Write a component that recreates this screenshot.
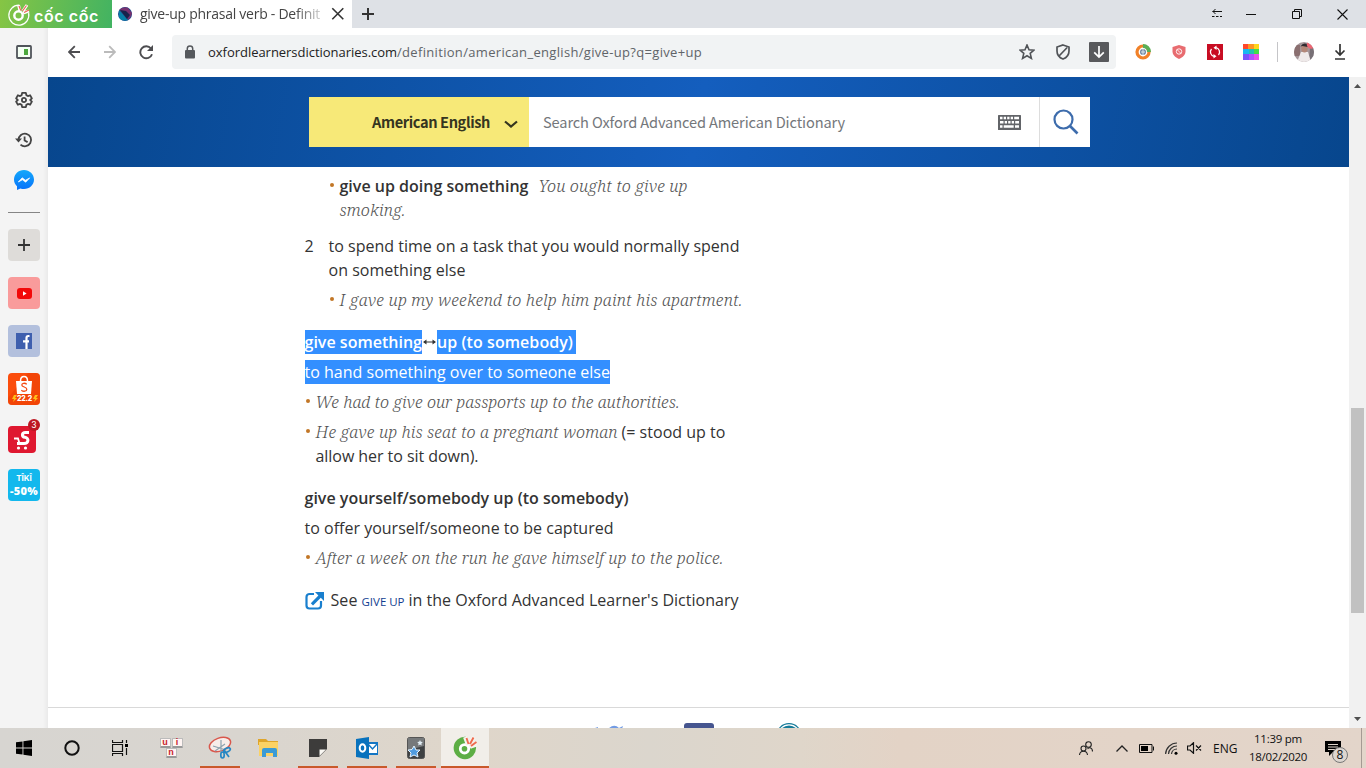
<script>
  // Spreads a run of text over a given width by adjusting its tracking.
  function fit(node, width) {
    const natural = node.getBoundingClientRect().width;
    const count = [...node.textContent].length;
    node.style.letterSpacing = (width - natural) / count + 'px';
  }
</script>

<div class="screen">
  <div class="tabs">
    <div class="brand">
      <svg width="24" height="26" viewBox="0 0 24 26">
        <path d="M12 4.200A10 10 0 1 0 21.600 12" fill="none" stroke="#fff" stroke-width="1.200" />
        <circle cx="11.500" cy="14.500" r="4.200" fill="none" stroke="#fff" stroke-width="2.400" />
        <path d="M11.500 4l1.500 6M20 4l-4 6M22 10l-6 2" stroke="#fff" stroke-width="3" />
        <path d="M12 5l1.800 4.500M19.500 4.500l-4 5.500M22 9l-5 2.500" stroke="#ec6254" stroke-width="1.200" />
      </svg>
      <span class="brandname"><b use:fit={65}>cốc cốc</b></span>
    </div>
    <div class="tab">
      <svg width="14" height="16" viewBox="0 0 14 16">
        <circle cx="7" cy="8" r="7" fill="#164a91" /><path d="M1 4Q5 0 10 1.700L14 7Q13 12 10 14Q5 7 1 4Z" fill="#76316f" /><path d="M1 4L10 14Q3 16 1 11Z" fill="#087fa7" /><path d="M2 4L8 5L12 9L9 13Z" fill="#17234c" />
      </svg>
      <span class="tabname"><span use:fit={180}>give-up phrasal verb - Definit</span></span>
      <svg width="14" height="14" viewBox="0 0 14 14"><path d="M1.300 1.300l11 11M12.300 1.300l-11 11" stroke="#333" stroke-width="1.600" /></svg>
    </div>
    <svg class="plus" width="12" height="12" viewBox="0 0 12 12"><path d="M6 0v12M0 6h12" stroke="#333" stroke-width="2" /></svg>
    <div class="winbtns">
      <svg width="10" height="10" viewBox="0 0 10 10"><path d="M.5 2.500H10M3.500 0L1 2.500L3.500 5M0 7.500h2.500M4 7.500h2.500M8 7.500h2" fill="none" stroke="#111" /></svg>
      <svg width="10" height="10" viewBox="0 0 10 10"><path d="M0 5.500h10" stroke="#111" /></svg>
      <svg width="10" height="10" viewBox="0 0 10 10"><path d="M.5 2.500h7v7h-7zM2.500 2.500v-2h7v7h-2" fill="none" stroke="#111" /></svg>
      <svg width="11" height="11" viewBox="0 0 11 11"><path d="M.5.5l10 10M10.500.5l-10 10" stroke="#111" stroke-width="1.100" /></svg>
    </div>
  </div>

  <div class="main">
    <aside>
      <svg class="panel" width="16" height="14" viewBox="0 0 16 14"><rect x="1" y="1" width="14" height="12" rx=".7" fill="#f4fff4" stroke="#50545a" stroke-width="1.800" /><rect x="8" y="4" width="4" height="6" fill="#4ba83d" /></svg>
      <svg class="gear" width="18" height="18" viewBox="0 0 24 24" fill="none" stroke="#444" stroke-width="2.400" stroke-linejoin="round"><path d="M9.500 2.500h5l.6 3 2 1.200 3-1 2.400 4.200-2.200 2.100 2.200 2.100-2.400 4.200-3-1-2 1.200-.6 3h-5l-.6-3-2-1.200-3 1-2.400-4.200L3.700 12 1.500 9.900l2.400-4.200 3 1 2-1.200z" /><circle cx="12" cy="12" r="2.800" /></svg>
      <svg class="hist" width="18" height="16" viewBox="0 0 18 16" fill="none" stroke="#444" stroke-width="1.800"><path d="M3.500 8a6.300 6.300 0 1 1 2 4.600" /><path d="M0 6.500h7L3.500 10.500z" fill="#444" stroke="none" /><path d="M9.600 4.500V8.500l3 1.600" /></svg>
      <svg class="msgr" width="20" height="20" viewBox="0 0 20 20"><defs><linearGradient id="mg" x1="0" y1="0" x2="0" y2="1"><stop offset="0" stop-color="#13a8fb" /><stop offset="1" stop-color="#0872fa" /></linearGradient></defs><path d="M10 0C4.400 0 0 4.200 0 9.600c0 2.600 1 5 3 6.700V20l3.400-1.500c1.100.400 2.300.6 3.600.6 5.600 0 10-4.200 10-9.500S15.600 0 10 0z" fill="url(#mg)" /><path d="M4.300 12l3.900-4.200 3.300 2.400 4.200-2.300-4 4.300-3.300-2.400z" fill="#fff" stroke="#fff" stroke-width=".7" stroke-linejoin="round" /></svg>
      <div class="rule"></div>
      <div class="app grey"><svg width="12" height="12" viewBox="0 0 12 12"><path d="M6 0v12M0 6h12" stroke="#333" stroke-width="1.800" /></svg></div>
      <div class="app yt"><svg width="15" height="11" viewBox="0 0 15 11"><rect width="15" height="11" rx="3" fill="#f20909" /><path d="M6 3.200l3.600 2.300L6 7.800z" fill="#fff" /></svg></div>
      <div class="app fb"><svg width="16" height="16" viewBox="0 0 16 16"><rect width="16" height="16" fill="#3e5fae" /><path d="M13.500 3h-1.200c-1.300 0-1.800.700-1.800 2V16M7 8.300h6" fill="none" stroke="#fff" stroke-width="2.200" /></svg></div>
      <div class="app shopee">
        <svg width="32" height="32" viewBox="0 0 32 32"><path d="M0 25L20 0H32V32H0Z" fill="#e63a00" opacity=".4" /><path d="M8 8h16l-1 13H9z" fill="#fff" /><path d="M12.500 8c0-6 7-6 7 0" fill="none" stroke="#fff" stroke-width="1.500" /><path d="M18.800 11.200c-2-1.500-5-1.200-5 .8 0 2.500 5 1.500 5 4.200 0 2.400-3.500 2.600-5.500 1" fill="none" stroke="#f44c14" stroke-width="1.300" /><path d="M6 22l-2 4h2l-1 3 4-4H7l2-3zM27 22l-2 4h2l-1 3 4-4h-2l2-3z" fill="#ffbe18" /></svg>
        <span><b use:fit={15}>22.2</b></span>
      </div>
      <div class="app sendo"><svg width="28" height="27" viewBox="0 0 28 27"><rect width="28" height="27" rx="4" fill="#df1830" /><path d="M21 6.500h-3.500c-4 0-4 4.300-.5 4.800 4.500.7 3.500 6.200-1 6.200H9" fill="none" stroke="#fff" stroke-width="3" /><path d="M6 12.500h4l1.500 5" fill="none" stroke="#fff" stroke-width="1.800" /><circle cx="10.500" cy="22" r="1.600" fill="#fff" /><circle cx="17.500" cy="22" r="1.600" fill="#fff" /></svg><i>3</i></div>
      <div class="app tiki"><span>TÎKÎ</span><b use:fit={28}>-50%</b></div>
    </aside>

    <div class="browser">
      <div class="toolbar">
        <svg class="back" width="12" height="14" viewBox="0 0 12 14"><path d="M12 7H1M6.800 1.200L1 7l5.800 5.800" fill="none" stroke="#4d4d50" stroke-width="1.800" /></svg>
        <svg class="fwd" width="12" height="14" viewBox="0 0 12 14"><path d="M0 7h11M5.200 1.200L11 7l-5.800 5.800" fill="none" stroke="#bbb" stroke-width="1.800" /></svg>
        <svg class="reload" width="15" height="15" viewBox="0 0 15 15"><path d="M13 9.200A6 6 0 1 1 12 3.500" fill="none" stroke="#4d4d50" stroke-width="1.900" /><path d="M14 0v6H8z" fill="#4d4d50" /></svg>
        <div class="address">
          <svg width="12" height="14" viewBox="0 0 12 14"><rect x="1" y="5" width="10" height="8.500" rx="1" fill="#55585c" /><path d="M3.300 6V3.600a2.700 2.700 0 0 1 5.400 0V6" fill="none" stroke="#55585c" stroke-width="1.500" /></svg>
          <span class="url"><span use:fit={189}>oxfordlearnersdictionaries.com</span><span class="path" use:fit={305}>/definition/american_english/give-up?q=give+up</span></span>
          <svg width="16" height="16" viewBox="0 0 16 16"><path d="M8 1l2 4.700 5 .4-3.800 3.300 1.200 5L8 11.800 3.600 14.400l1.200-5L1 6.100l5-.4z" fill="none" stroke="#505357" stroke-width="1.600" /></svg>
          <svg class="shield" width="16" height="16" viewBox="0 0 16 16"><path d="M8 1l6 2v4c0 3.500-2.600 6.800-6 8-3.400-1.200-6-4.500-6-8V3zM4.500 11.500L12.200 3.500" fill="none" stroke="#505357" stroke-width="1.700" /></svg>
          <svg class="dl" width="20" height="20" viewBox="0 0 20 20"><rect width="20" height="20" rx="1" fill="#58595c" /><path d="M10 4v11M5.200 10.300L10 15l4.800-4.700" fill="none" stroke="#fff" stroke-width="1.700" /></svg>
        </div>
        <div class="exts">
          <svg width="16" height="16" viewBox="0 0 16 16"><circle cx="8" cy="8" r="6" fill="#fff" stroke="#f18128" stroke-width="3.200" /><path d="M8 2a6 6 0 0 1 6 6" fill="none" stroke="#5aaf56" stroke-width="4" /><circle cx="8" cy="8" r="3" fill="#7188a3" /><path d="M8 5v6M6 8h4" stroke="#dce6eb" /></svg>
          <svg width="16" height="16" viewBox="0 0 16 16"><path d="M8 1l6.500 2v4.500c0 3-2.500 6-6.500 7.500-4-1.500-6.500-4.500-6.500-7.500V3z" fill="#e86c70" /><circle cx="8" cy="7.500" r="2.700" fill="none" stroke="#fff" stroke-width=".9" /><path d="M6 5.500l4 4" stroke="#fff" stroke-width=".8" /></svg>
          <svg width="16" height="16" viewBox="0 0 16 16"><rect width="16" height="16" fill="#c80d23" /><path d="M9 3.700a4.500 4.500 0 0 1 2.500 7.300M7 12.300A4.500 4.500 0 0 1 4.500 5" fill="none" stroke="#fff" stroke-width="1.300" /><path d="M9.500 1.500v4.400L6.500 3.700zM6.500 14.500v-4.400l3 2.200z" fill="#fff" /></svg>
          <svg width="16" height="16" viewBox="0 0 16 16"><path fill="#ff482c" d="M0 0h5v5H0z" /><path fill="#ff9424" d="M5 0h6v5H5z" /><path fill="#ffd51c" d="M11 0h5v5h-5z" /><path fill="#17b9f1" d="M0 5h6v5H0z" /><path fill="#20c4b0" d="M6 5h5v5H6z" /><path fill="#44dd47" d="M11 5h5v5h-5z" /><path fill="#7655fc" d="M0 10h6v6H0z" /><path fill="#b04fff" d="M6 10h5v6H6z" /><path fill="#e850ed" d="M11 10h5v6h-5z" /></svg>
        </div>
        <div class="sep"></div>
        <svg class="avatar" width="20" height="20" viewBox="0 0 20 20"><defs><clipPath id="av"><circle cx="10" cy="10" r="10" /></clipPath></defs><g clip-path="url(#av)"><rect width="20" height="20" fill="#a5979a" /><path d="M0 3h6v11H0z" fill="#8a6f70" /><path d="M16 6h4v12h-5z" fill="#777076" /><path d="M3 20l4-10h7l3 10z" fill="#eee9e9" /><ellipse cx="10.500" cy="6.500" rx="3.200" ry="4" fill="#b38778" /><path d="M6.500 4.500q3-5 8-1.500l-1 2-5-1z" fill="#302c31" /><circle cx="17" cy="2.500" r="4.200" fill="#ed6673" /></g></svg>
        <svg class="save" width="12" height="16" viewBox="0 0 12 16"><path d="M6 0v11M1.500 6.500L6 11l4.500-4.500M1 15h10" fill="none" stroke="#333" stroke-width="1.700" /></svg>
      </div>

      <div class="viewport">
        <div class="page">
          <header>
            <div class="search">
              <div class="lang"><span use:fit={118}>American English</span><svg width="14" height="9" viewBox="0 0 14 9"><path d="M1 1.500l6 5 6-5" fill="none" stroke="#35351f" stroke-width="2.200" /></svg></div>
              <div class="field"><span use:fit={302}>Search Oxford Advanced American Dictionary</span>
                <svg width="23" height="15" viewBox="0 0 23 15"><rect width="23" height="15" rx=".5" fill="#626468" /><path d="M2 3h2.500M5.700 3H8M9.200 3h2.300M12.700 3H15M16.200 3h4.800M2 7.200h3.500M6.700 7.200H9M10.200 7.200h2.300M13.700 7.200H16M17.200 7.200H21M2 11.500h2.500M5.700 11.500h10M17 11.500h4" stroke="#fff" stroke-width="2.400" /></svg>
              </div>
              <div class="go"><svg width="26" height="26" viewBox="0 0 26 26"><circle cx="10.500" cy="10.500" r="9" fill="none" stroke="#3d6cac" stroke-width="2.200" /><path d="M17 17l7.500 7.500" stroke="#3d6cac" stroke-width="2.600" /></svg></div>
            </div>
          </header>

          <article>
            <div class="ex deep"><i class="dot"></i><div><p><b use:fit={189}>give up doing something</b><em class="after" use:fit={149}>You ought to give up</em></p><p><em use:fit={66}>smoking.</em></p></div></div>
            <div class="sense"><span class="num">2</span><div><p><span use:fit={411}>to spend time on a task that you would normally spend</span></p><p><span use:fit={137}>on something else</span></p></div></div>
            <div class="ex deep small"><i class="dot"></i><div><p><em use:fit={403}>I gave up my weekend to help him paint his apartment.</em></p></div></div>

            <p class="head"><b class="sel" use:fit={117.500}>give something</b><svg width="15" height="24" viewBox="0 0 15 24"><path d="M2 12h11" stroke="#333" /><path d="M1 12l3.500-2.500v5zM14 12l-3.500-2.500v5z" fill="#333" /></svg><b class="sel tail"><span use:fit={136}>up (to somebody)</span></b></p>
            <p class="def"><span class="sel" use:fit={305.500}>to hand something over to someone else</span></p>
            <div class="ex small"><i class="dot"></i><div><p><em use:fit={364}>We had to give our passports up to the authorities.</em></p></div></div>
            <div class="ex small"><i class="dot"></i><div><p><em use:fit={302}>He gave up his seat to a pregnant woman</em><span class="gloss" use:fit={104}>(= stood up to</span></p><p><span use:fit={163}>allow her to sit down).</span></p></div></div>

            <p class="head"><b use:fit={324}>give yourself/somebody up (to somebody)</b></p>
            <p class="def"><span use:fit={309}>to offer yourself/someone to be captured</span></p>
            <div class="ex small"><i class="dot"></i><div><p><em use:fit={408}>After a week on the run he gave himself up to the police.</em></p></div></div>

            <p class="see"><svg width="19" height="18" viewBox="0 0 19 18"><path d="M9 2H4.500A3 3 0 0 0 1.500 5v8.500a3 3 0 0 0 3 3H13a3 3 0 0 0 3-3V9" fill="none" stroke="#197fce" stroke-width="2.200" /><path d="M10 0h9v9l-3.200-3.200L8 13.500 5.800 11.300l7.600-7.800z" fill="#197fce" /></svg><span use:fit={27}>See</span><a use:fit={43}>GIVE UP</a><span use:fit={330}>in the Oxford Advanced Learner's Dictionary</span></p>
          </article>

          <footer>
            <svg class="tw" width="34" height="30" viewBox="0 0 34 30"><path d="M2 5l3-1v2zM15 6q6-6 11-1l4-2-1 3v6H18z" fill="#739ce4" /></svg>
            <svg class="fbk" width="30" height="30" viewBox="0 0 30 30"><rect width="30" height="30" rx="3" fill="#46558f" /></svg>
            <svg class="wp" width="26" height="26" viewBox="0 0 26 26"><circle cx="13" cy="13" r="12.300" fill="#fff" stroke="#167b99" stroke-width="1.200" /><circle cx="13" cy="13" r="10.500" fill="#167b99" /></svg>
          </footer>
        </div>
        <div class="scrollbar">
          <svg width="7" height="4" viewBox="0 0 7 4"><path d="M0 4L3.500 0 7 4z" fill="#505050" /></svg>
          <div class="thumb"></div>
          <svg class="down" width="7" height="4" viewBox="0 0 7 4"><path d="M0 0l3.500 4L7 0z" fill="#505050" /></svg>
        </div>
      </div>
    </div>
  </div>

  <div class="taskbar">
    <div class="cell start"><svg width="16" height="16" viewBox="0 0 16 16"><path d="M0 2.300l6.500-.9v6.200H0zM7.400 1.200L16 0v7.600H7.400zM0 8.400h6.500v6.200L0 13.700zM7.400 8.400H16V16l-8.600-1.200z" /></svg></div>
    <div class="cell"><svg width="18" height="18" viewBox="0 0 18 18"><circle cx="9" cy="9" r="6.700" fill="none" stroke="#111" stroke-width="2" /></svg></div>
    <div class="cell"><svg width="16" height="16" viewBox="0 0 16 16"><path d="M.5 0v2.500h10V0M.5 4.500h10v7H.5zM.5 16v-2.500h10V16M14.500 0v3M14.500 8v7" fill="none" stroke="#111" stroke-width="1.200" /><path d="M13 4h3v3h-3z" /></svg></div>
    <div class="cell keys"><div><span>u</span><span>i</span></div><div><span>n</span></div></div>
    <div class="cell on wide"><svg width="24" height="24" viewBox="0 0 24 24"><ellipse cx="12" cy="8.500" rx="11" ry="6.500" transform="rotate(-20 12 8.500)" fill="#f7edea" stroke="#d9574c" stroke-width="1.500" /><path d="M13 4v13M5 10l13 4M7 15l10-7" stroke="#8ca2af" stroke-width="1.200" /><ellipse cx="19" cy="14" rx="3.500" ry="2" transform="rotate(-25 19 14)" fill="none" stroke="#2686c3" stroke-width="1.700" /><ellipse cx="14.500" cy="19" rx="1.700" ry="3" fill="none" stroke="#2686c3" stroke-width="1.700" /><path d="M16 14l5 7" stroke="#2686c3" stroke-width="1.700" /></svg></div>
    <div class="cell wide"><svg width="22" height="20" viewBox="0 0 22 20"><path d="M0 1h8l2 2h10v4H0z" fill="#dfa52b" /><path d="M1 4h19v14H1z" fill="#fbd265" /><path d="M4 19v-7a2 2 0 0 1 2-2h11a2 2 0 0 1 2 2v7h-4v-4H8v4z" fill="#3b9bd6" /></svg></div>
    <div class="cell on wide"><svg width="18" height="18" viewBox="0 0 18 18"><path d="M0 0h18v10l-8 8H0z" fill="#3d3c3b" /><path d="M10.500 17v-6.500H17z" fill="#faf8f3" /></svg></div>
    <div class="cell on wide"><svg width="22" height="22" viewBox="0 0 22 22"><path d="M11 5h11v13H11z" fill="#1476c4" /><path d="M12 7h9v9h-9z" fill="#fff" /><path d="M12 7l4.500 5L21 7" fill="none" stroke="#1476c4" stroke-width="1.500" /><path d="M0 2l13-2v22L0 20z" fill="#0872bd" /><ellipse cx="6.500" cy="11" rx="2.800" ry="3.700" fill="none" stroke="#fff" stroke-width="2" /></svg></div>
    <div class="cell on wide"><svg width="18" height="22" viewBox="0 0 18 22"><rect x=".5" y=".5" width="17" height="21" rx="2" fill="#3e4143" stroke="#555" /><path d="M1 1h16v8L1 13z" fill="#76797b" /><path d="M7 9l2 4h4l-3 3 1 4-4-2-4 2 1-4-3-3 4-.5z" fill="#4f9bdf" stroke="#e9f5ff" /><path d="M13 3l.8 1.800 2 .2-1.400 1.400.3 2-1.700-1-1.800 1 .4-2L10.200 5l2-.2z" fill="#e3eef5" /></svg></div>
    <div class="cell on active"><svg width="24" height="24" viewBox="0 0 24 24"><path d="M13 .8A11.200 11.200 0 1 0 23 11l-7 1-4-5z" fill="#5dae45" /><circle cx="11.500" cy="12.800" r="4.200" fill="#5dae45" stroke="#fff" stroke-width="2.800" /><path d="M12 1l3 8M21 1l-5 8M24 8l-7 3" stroke="#f6f4f0" stroke-width="4" /><path d="M13.500 2l2 6M20.500 1.500l-3.500 6.500M23.500 6l-5.500 4" stroke="#ef6a4d" stroke-width="1.900" /></svg></div>

    <div class="tray">
      <svg class="people" width="14" height="15" viewBox="0 0 14 15"><circle cx="9.500" cy="3.500" r="2.800" fill="none" stroke="#222" stroke-width="1.100" /><circle cx="4.500" cy="7.500" r="2.500" fill="none" stroke="#222" stroke-width="1.100" /><path d="M.5 14c.5-5 7.500-5 8 0M8.500 8c2-2.500 5-1 5 2.500" fill="none" stroke="#222" stroke-width="1.100" /></svg>
      <svg class="up" width="12" height="7" viewBox="0 0 12 7"><path d="M.5 6.500L6 1l5.500 5.500" fill="none" stroke="#222" stroke-width="1.300" /></svg>
      <svg class="bat" width="15" height="9" viewBox="0 0 15 9"><path d="M.5.5h12.500v8H.5zM14.500 2.500v4" fill="none" stroke="#111" /><path d="M2 2h7v5H2z" /></svg>
      <svg class="wifi" width="13" height="13" viewBox="0 0 13 13"><path d="M.6 12A11.500 11.500 0 0 1 12 1M3.500 12A8.500 8.500 0 0 1 12 4M6.500 12A5.500 5.500 0 0 1 12 7" fill="none" stroke="#333" stroke-width="1.200" /><circle cx="11" cy="11.200" r="1.500" /></svg>
      <svg class="vol" width="15" height="12" viewBox="0 0 15 12"><path d="M.5 4h2.500L6.500.7v10.600L3 8H.5zM9 3.500l5 5M14 3.500l-5 5" fill="none" stroke="#111" stroke-width="1.200" /></svg>
      <span class="eng" use:fit={23}>ENG</span>
      <div class="clock"><div><span use:fit={48}>11:39 pm</span></div><div><span use:fit={58}>18/02/2020</span></div></div>
      <div class="note"><svg width="16" height="15" viewBox="0 0 16 15"><path d="M0 0h16v11H8l-4 4v-4H0z" /><path d="M3 3.500h10M3 6h10M3 8.500h7" stroke="#dfd4c9" /></svg><span>8</span></div>
      <div class="edge"></div>
    </div>
  </div>
</div>

<style>
  :global(body) { overflow: hidden; }
  .screen { width: 1366px; height: 768px; display: flex; flex-direction: column; background: #fff; font-family: "Open Sans", sans-serif; overflow: hidden; }
  svg { display: block; flex: none; }
  p { margin: 0; }
  span, b, em, a { white-space: pre; }
  .tabs { height: 28px; flex: none; display: flex; align-items: center; background: #dee1e6; }
  .brand { width: 112px; height: 28px; display: flex; align-items: center; background: linear-gradient(100deg, #86c544, #42b362); color: #fff; }
  .brand svg { margin: 0 3px 0 7px; }
  .brandname { font: 16px/28px Inter, sans-serif; padding-top: 3px; }
  .brandname b { font-weight: 600; }
  .tab { width: 240px; height: 28px; box-sizing: border-box; display: flex; align-items: center; background: #fff; padding-left: 6px; }
  .tabname { width: 181px; margin: 0 10px 0 8px; font-size: 14px; line-height: 26px; color: #444; mask-image: linear-gradient(90deg, #000 155px, rgba(0, 0, 0, .25) 180px); }
  .plus { margin-left: 10px; }
  .winbtns { margin-left: auto; display: flex; align-items: center; padding-right: 18px; }
  .winbtns svg { margin-left: 36px; }
  .winbtns svg:nth-child(2) { margin-left: 24px; }
  .winbtns svg:nth-child(4) { margin-left: 35px; }
  .main { height: 700px; display: flex; flex: none; }
  aside { width: 48px; flex: none; display: flex; flex-direction: column; align-items: center; background: linear-gradient(90deg, #f4f4f4 43px, #eaeaea); }
  .panel { margin-top: 17px; }
  .gear { margin-top: 32px; }
  .hist { margin-top: 23px; }
  .msgr { margin-top: 22px; }
  .rule { width: 32px; height: 1px; margin: 22px 0 16px; background: #858585; }
  .app { width: 32px; height: 32px; flex: none; margin-bottom: 16px; border-radius: 4px; display: flex; align-items: center; justify-content: center; position: relative; overflow: hidden; }
  .grey { background: #dedcd9; }
  .yt { background: #f99b9b; }
  .fb { background: #b3c0dd; }
  .shopee { background: #fb4d0c; }
  .shopee span { position: absolute; bottom: 2px; left: 9px; color: #fff; font: 7px/9px Inter, sans-serif; }
  .shopee b { font-weight: 800; }
  .sendo { overflow: visible; justify-content: flex-start; align-items: flex-end; }
  .sendo i { position: absolute; top: -2px; right: 0; width: 12px; height: 12px; border-radius: 50%; background: #bd1722; color: #fff; font: 9px/12px Roboto, sans-serif; text-align: center; }
  .tiki { background: #13b8ed; color: #fff; flex-direction: column; }
  .tiki span { font: 700 8px/12px Inter, sans-serif; }
  .tiki b { font: 800 11px/14px "Open Sans", sans-serif; }
  .browser { width: 1318px; display: flex; flex-direction: column; }
  .toolbar { height: 49px; flex: none; display: flex; align-items: center; box-sizing: border-box; padding-bottom: 1px; }
  .back { margin-left: 20px; }
  .fwd { margin-left: 24px; }
  .reload { margin-left: 23px; }
  .address { width: 944px; height: 34px; box-sizing: border-box; margin-left: 18px; padding: 0 7px 0 12px; display: flex; align-items: center; background: #f1f3f4; border-radius: 4px; }
  .url { flex: 1; margin-left: 12px; font-size: 13px; color: #222; }
  .path { color: #606468; }
  .shield { margin-left: 20px; }
  .dl { margin-left: 18px; }
  .exts { display: flex; gap: 20px; margin-left: 19px; }
  .sep { width: 1px; height: 20px; background: #c5c5c8; margin-left: 18px; }
  .avatar { margin-left: 16px; }
  .save { margin-left: 20px; }
  .viewport { display: flex; height: 651px; }
  .page { width: 1301px; height: 651px; overflow: hidden; display: flex; flex-direction: column; }
  header { height: 90px; flex: none; box-sizing: border-box; padding: 20px 0 0 261px; background: linear-gradient(100deg, #07468d 0%, #145ebe 50%, #07468d 100%); }
  .search { width: 781px; height: 50px; display: flex; background: #fff; font-family: "Noto Sans CJK SC", sans-serif; font-size: 14.6px; }
  .search span { margin-top: -1px; }
  .lang { width: 220px; box-sizing: border-box; padding-left: 63px; display: flex; align-items: center; background: #f7e978; color: #35351f; font-weight: 600; }
  .lang svg { margin: 4px 0 0 14px; }
  .field { width: 511px; box-sizing: border-box; padding: 0 18px 0 14px; display: flex; align-items: center; justify-content: space-between; color: #74777b; border-right: 1px solid #ddd; font-weight: 400; }
  .go { flex: 1; display: flex; align-items: center; justify-content: center; padding-left: 1px; }
  article { height: 540px; flex: none; box-sizing: border-box; padding: 7px 0 0 256.5px; font-size: 16px; line-height: 24px; color: #333; }
  article p { display: flex; height: 24px; }
  article b { font-weight: 600; }
  em { font-family: "Noto Serif", "Liberation Serif", serif; font-size: 16.5px; font-weight: 300; font-style: italic; color: #555; }
  .after { margin-left: 10px; }
  .gloss { margin-left: 4px; }
  .ex { display: flex; }
  .small { margin-top: 6px; }
  .deep { padding-left: 24px; }
  .dot { width: 4px; height: 4px; flex: none; border-radius: 50%; background: #c27626; margin: 9px 6px 0 1px; }
  .sense { display: flex; margin-top: 12px; }
  .num { width: 24px; flex: none; }
  .head { margin-top: 18px; }
  .def { margin-top: 6px; }
  .sel { background: #338fff; color: #fff; height: 24px; }
  .tail { padding-right: 3px; }
  .see { margin-top: 18px; align-items: center; }
  .see svg { margin: 1px 7px 0 0; }
  .see a { font-size: 11.5px; margin: 3px 4px 0 4px; color: #123e91; }
  footer { height: 40px; box-sizing: border-box; border-top: 1px solid #d9d9d9; display: flex; align-items: flex-start; padding: 15px 0 0 545px; }
  .fbk { margin-left: 57px; }
  .wp { margin-left: 62px; }
  .scrollbar { width: 17px; height: 651px; box-sizing: border-box; display: flex; flex-direction: column; align-items: center; background: #f1f1f1; padding: 7px 0; }
  .thumb { width: 13px; height: 205px; margin-top: 320px; background: #c1c1c1; }
  .down { margin-top: auto; }
  .taskbar { height: 40px; flex: none; display: flex; background: linear-gradient(90deg, #d7d5d1 0, #d9d5cf 240px, #dfd6ca 480px, #dbd6cd 650px, #dfd6ca 800px, #e3d3c6 900px, #e3d5ca 1366px); }
  .cell { width: 48px; height: 40px; box-sizing: border-box; display: flex; align-items: center; justify-content: center; border-top: 2px solid transparent; border-bottom: 2px solid transparent; background-clip: border-box; }
  .wide { width: 40px; margin-left: 9px; }
  .keys { flex-direction: column; width: 54px; }
  .keys div { display: flex; gap: 1px; }
  .keys span { width: 9px; height: 7px; border: 1px solid #bbb; border-bottom: 2px solid #999; border-radius: 1px; background: #fff5f3; color: #c7232c; font: 700 9px/6px "Liberation Sans", sans-serif; text-align: center; }
  .keys + .wide { margin-left: 2px; }
  .on { border-bottom-color: #c9592b; }
  .active { background: #f1eee9; margin-left: 5px; }
  .tray { margin-left: auto; display: flex; align-items: center; font-size: 12px; color: #111; }
  .up { margin-left: 23px; }
  .bat { margin-left: 11px; }
  .wifi { margin-left: 11px; }
  .vol { margin-left: 9px; }
  .eng { margin-left: 11px; width: 23px; }
  .clock { width: 60px; margin-left: 12px; font-size: 11.5px; line-height: 18px; text-align: center; }
  .note { position: relative; margin-left: 17px; }
  .note span { position: absolute; left: 7px; top: 6px; width: 14px; height: 14px; border: 1px solid #777; border-radius: 50%; background: #ddd6d0; font: 12px/14px "Open Sans", sans-serif; text-align: center; }
  .edge { width: 1px; height: 40px; margin: 0 4px 0 20px; background: #a59a93; }
</style>
